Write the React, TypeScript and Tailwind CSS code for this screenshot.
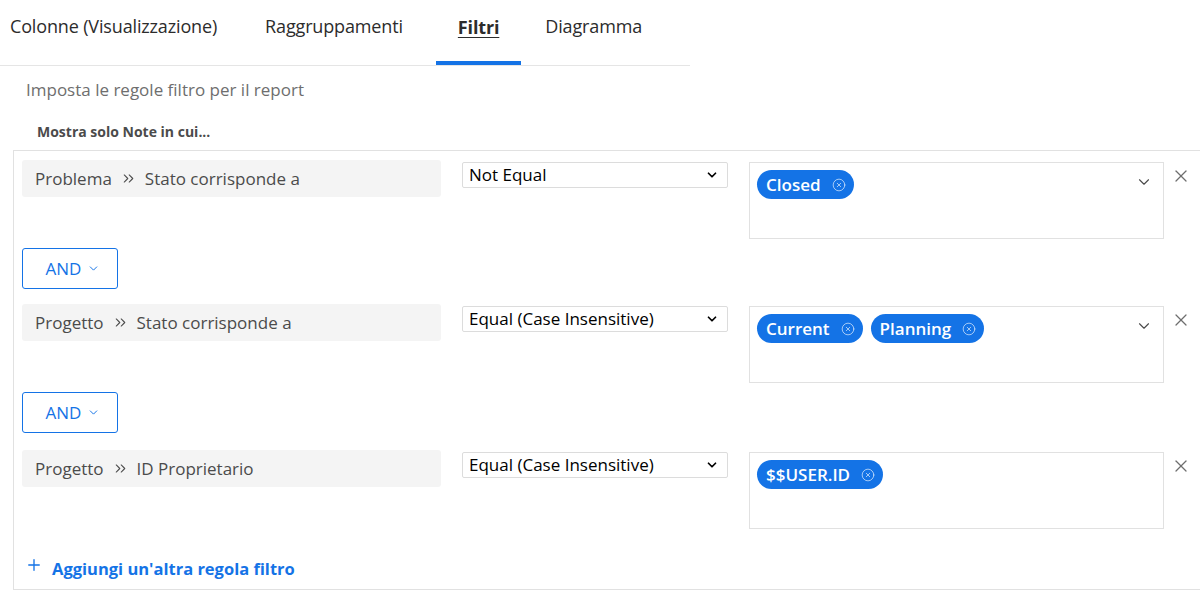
import { ChevronDown, ChevronsRight, CircleX, Plus, X } from "lucide-react";

type Rule = {
  object: string;
  field: string;
  op: string;
  values: string[];
  chevron: boolean;
};

const rules: Rule[] = [
  { object: "Problema", field: "Stato corrisponde a", op: "Not Equal", values: ["Closed"], chevron: true },
  { object: "Progetto", field: "Stato corrisponde a", op: "Equal (Case Insensitive)", values: ["Current", "Planning"], chevron: true },
  { object: "Progetto", field: "ID Proprietario", op: "Equal (Case Insensitive)", values: ["$$USER.ID"], chevron: false },
];

const Chip = ({ label }: { label: string }) => (
  <span className="flex items-center h-[29px] rounded-full bg-[#1473e6] pl-[9px] pr-[8px] text-[17px] font-semibold text-white">
    {label}
    <CircleX size={14} strokeWidth={1.3} className="ml-[11px] text-white/80" />
  </span>
);

const AndButton = () => (
  <button className="flex items-center justify-center w-[96px] h-[41px] border border-[#1473e6] rounded-[3px] text-[#1473e6] text-[17px] gap-[6px]">
    <span className="ml-[6px]">AND</span>
    <ChevronDown size={13} strokeWidth={1.8} />
  </button>
);

const RuleRow = ({ rule }: { rule: Rule }) => (
  <div className="flex items-start">
    <div className="flex items-center w-[419px] h-[37px] bg-[#f4f4f4] rounded-[3px] pl-[13px] text-[17px] text-[#4b4b4b]">
      <span>{rule.object}</span>
      <ChevronsRight size={17} strokeWidth={1.5} className="mx-[8px] text-[#4b4b4b]" />
      <span>{rule.field}</span>
    </div>
    <div className="ml-[21px] mt-[2px] flex items-center justify-between w-[266px] h-[26px] border border-[#dcdcdc] rounded-[2px] pl-[6px] pr-[8px] text-[17px] text-black">
      <span>{rule.op}</span>
      <ChevronDown size={14} strokeWidth={3} />
    </div>
    <div className="ml-[21px] mt-[2px] flex justify-between w-[415px] h-[77px] border border-[#e1e1e1] pl-[7px] pr-[10px] pt-[7px]">
      <div className="flex gap-[8px]">
        {rule.values.map((v) => (
          <Chip key={v} label={v} />
        ))}
      </div>
      {rule.chevron && <ChevronDown size={18} strokeWidth={1.5} className="mt-[3px] text-[#4b4b4b]" />}
    </div>
    <X size={20} strokeWidth={1.5} className="ml-[7px] mt-[6px] text-[#6e6e6e]" />
  </div>
);

export default function App() {
  return (
    <div className="w-[1200px] h-[601px] bg-white font-['Open_Sans',sans-serif] overflow-hidden">
      {/* tabs */}
      <div className="flex w-[690px] h-[66px] border-b border-[#e5e5e5] text-[18px] leading-[27px] tracking-[-0.15px] text-[#2c2c2c]">
        <div className="ml-[10px] pt-[13px]">Colonne (Visualizzazione)</div>
        <div className="ml-[48px] pt-[13px]">Raggruppamenti</div>
        <div className="ml-[33px] h-[65px] pt-[14px] px-[22px] border-b-[4px] border-[#1473e6] font-bold underline underline-offset-[3px]">
          Filtri
        </div>
        <div className="ml-[24px] pt-[13px]">Diagramma</div>
      </div>

      <p className="mt-[12px] ml-[26px] text-[17px] leading-[24px] text-[#6e6e6e]">Imposta le regole filtro per il report</p>
      <p className="mt-[20px] ml-[37px] text-[14px] leading-[20px] font-bold text-[#4b4b4b]">Mostra solo Note in cui...</p>

      <div className="mt-[8px] ml-[13px] border-l border-t border-b border-[#e1e1e1] pl-[8px] pt-[9px] h-[440px]">
        <RuleRow rule={rules[0]} />
        <div className="mt-[9px] mb-[15px]">
          <AndButton />
        </div>
        <RuleRow rule={rules[1]} />
        <div className="mt-[9px] mb-[17px]">
          <AndButton />
        </div>
        <RuleRow rule={rules[2]} />
        <div className="mt-[28px] ml-[3px] flex items-center text-[#1473e6]">
          <Plus size={18} strokeWidth={1.8} className="-mt-[8px]" />
          <span className="ml-[9px] text-[16.5px] font-bold">Aggiungi un'altra regola filtro</span>
        </div>
      </div>
    </div>
  );
}
